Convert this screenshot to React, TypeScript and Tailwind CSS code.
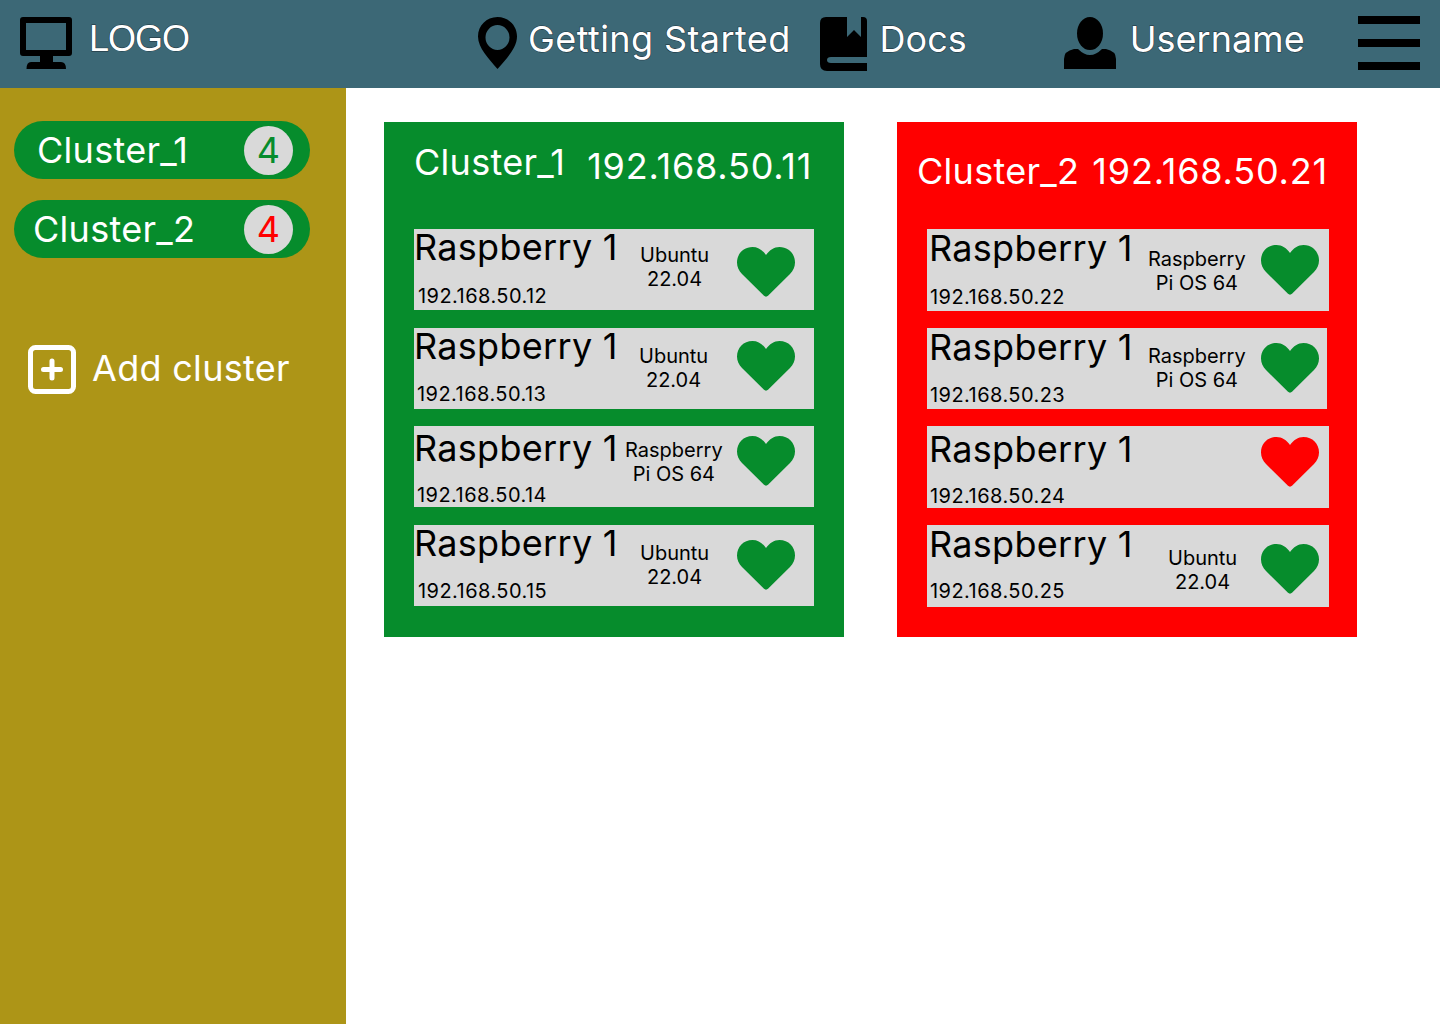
type Node = {
  ip: string;
  os?: string[];
  heart?: string;
  titleTop: string;
  ipLeft: string;
  ipTop: string;
  leftW: string;
  osTop?: string;
  heartTop: string;
  size: string;
};

const greenNodes: Node[] = [
  { ip: "192.168.50.12", os: ["Ubuntu", "22.04"], titleTop: "mt-[-4px]", ipLeft: "ml-1", ipTop: "mt-[15px]", leftW: "w-[226px]", osTop: "mt-[14px]", heartTop: "mt-[18px]", size: "w-[400px] h-[81px]" },
  { ip: "192.168.50.13", os: ["Ubuntu", "22.04"], titleTop: "mt-[-4px]", ipLeft: "ml-[3px]", ipTop: "mt-[14px]", leftW: "w-[225px]", osTop: "mt-[16px]", heartTop: "mt-[13px]", size: "w-[400px] h-[81px]" },
  { ip: "192.168.50.14", os: ["Raspberry", "Pi OS 64"], titleTop: "mt-0", ipLeft: "ml-[3px]", ipTop: "mt-[13px]", leftW: "w-[211px]", osTop: "mt-[12px]", heartTop: "mt-[10px]", size: "w-[400px] h-[81px]" },
  { ip: "192.168.50.15", os: ["Ubuntu", "22.04"], titleTop: "mt-[-4px]", ipLeft: "ml-1", ipTop: "mt-[14px]", leftW: "w-[226px]", osTop: "mt-4", heartTop: "mt-[15px]", size: "w-[400px] h-[81px]" },
];

const redNodes: Node[] = [
  { ip: "192.168.50.22", os: ["Raspberry", "Pi OS 64"], titleTop: "mt-[-3px]", ipLeft: "ml-[3px]", ipTop: "mt-[15px]", leftW: "w-[221px]", osTop: "mt-[18px]", heartTop: "mt-[16px]", size: "w-[402px] h-[82px]" },
  { ip: "192.168.50.23", os: ["Raspberry", "Pi OS 64"], titleTop: "mt-[-3px]", ipLeft: "ml-[3px]", ipTop: "mt-[14px]", leftW: "w-[221px]", osTop: "mt-[16px]", heartTop: "mt-[15px]", size: "w-[400px] h-[81px]" },
  { ip: "192.168.50.24", heart: "text-[#ff0000]", titleTop: "mt-px", ipLeft: "ml-[3px]", ipTop: "mt-[13px]", leftW: "w-[221px]", heartTop: "mt-[11px]", size: "w-[402px] h-[82px]" },
  { ip: "192.168.50.25", os: ["Ubuntu", "22.04"], titleTop: "mt-[-3px]", ipLeft: "ml-[3px]", ipTop: "mt-[13px]", leftW: "w-[241px]", osTop: "mt-[21px]", heartTop: "mt-[19px]", size: "w-[402px] h-[82px]" },
];

function Heart({ className }: { className: string }) {
  return (
    <svg viewBox="0 0 58 50" className={className} fill="currentColor">
      <path d="M29 8C25.5 3 21 0 15.5 0 6.5 0 0 6.8 0 15.5c0 4.6 1.9 8.400 5 11.500L27 48.800c1.100 1.100 2.900 1.100 4 0L53 27c3.100-3.100 5-6.900 5-11.500C58 6.800 51.500 0 42.500 0 37 0 32.500 3 29 8Z" />
    </svg>
  );
}

function NodeRow({ node, titleLeft, heartRight }: { node: Node; titleLeft: string; heartRight: string }) {
  return (
    <div className={`flex shrink-0 bg-[#d9d9d9] text-black ${node.size}`}>
      <div className={`shrink-0 ${node.leftW}`}>
        <div className={`text-[36px] leading-[44px] tracking-[0.3px] whitespace-nowrap ${titleLeft} ${node.titleTop}`}>Raspberry 1</div>
        <div className={`text-[20px] leading-[24px] tracking-[0.45px] whitespace-nowrap ${node.ipLeft} ${node.ipTop}`}>{node.ip}</div>
      </div>
      {node.os && (
        <div className={`text-[20px] leading-[24px] text-center whitespace-nowrap ${node.osTop}`}>
          {node.os.map((line) => (
            <div key={line}>{line}</div>
          ))}
        </div>
      )}
      <Heart className={`ml-auto h-[50px] w-[58px] shrink-0 ${heartRight} ${node.heartTop} ${node.heart ?? "text-[#068c2c]"}`} />
    </div>
  );
}

function PillItem({ name, textLeft, countColor }: { name: string; textLeft: string; countColor: string }) {
  return (
    <div className="flex h-[58px] w-[296px] items-center rounded-[29px] bg-[#068c2c]">
      <span className={`text-[36px] tracking-[0.3px] text-white ${textLeft}`}>{name}</span>
      <span className={`ml-auto mr-[17px] flex size-[49px] items-center justify-center rounded-full bg-[#d9d9d9] text-[36px] ${countColor}`}>4</span>
    </div>
  );
}

const navText = "text-[36px] leading-[44px] text-white [-webkit-text-stroke:1px_#1c2f36] [paint-order:stroke_fill] whitespace-nowrap";

export default function App() {
  return (
    <div className="flex h-[1024px] w-[1440px] flex-col overflow-hidden bg-white font-['Inter',sans-serif]">
      <header className="flex h-[88px] shrink-0 items-start bg-[#3c6876] pl-5">
        <svg viewBox="0 0 52 52" className="mt-[17px] h-[52px] w-[52px] shrink-0">
          <path fillRule="evenodd" d="M3 0H49A3 3 0 0 1 52 3V36A3 3 0 0 1 49 39H33V45H41Q46 45 46 52H6.500Q6.500 45 11 45H20V39H3A3 3 0 0 1 0 36V3A3 3 0 0 1 3 0ZM6 6V33H46V6Z" />
        </svg>
        <span className={`ml-[17px] mt-[17px] tracking-[-1px] font-['Liberation_Sans',sans-serif] ${navText}`}>LOGO</span>

        <svg viewBox="0 0 39 52" className="ml-[289px] mt-[17px] h-[52px] w-[39px] shrink-0">
          <path fillRule="evenodd" d="M19.500 0C30.500 0 39 8.500 39 19.500C39 31 28 42 19.500 52C11 42 0 31 0 19.500C0 8.500 8.500 0 19.500 0ZM19.500 8A12 12.500 0 1 0 19.500 33A12 12.500 0 1 0 19.500 8Z" />
        </svg>
        <span className={`ml-[11px] mt-[17px] tracking-[0.4px] ${navText}`}>Getting Started</span>

        <svg viewBox="0 0 47 54" className="ml-[29px] mt-[17px] h-[54px] w-[47px] shrink-0">
          <path d="M6 0H27V20L34 13L41 20V0H43Q47 0 47 4V40H11Q7 40 7 43Q7 46 11 46H47V54H7Q0 54 0 47V6Q0 0 6 0Z" />
        </svg>
        <span className={`ml-[13px] mt-[17px] ${navText}`}>Docs</span>

        <svg viewBox="0 0 52 52" className="ml-[97px] mt-[17px] h-[52px] w-[52px] shrink-0">
          <ellipse cx="26" cy="16.500" rx="13" ry="16.500" />
          <path d="M0 52V42Q0 34 10 32L14 32Q20 38 26 38Q32 38 38 32L42 32Q52 34 52 42V52Z" />
        </svg>
        <span className={`ml-[14px] mt-[17px] ${navText}`}>Username</span>

        <div className="ml-auto mr-5 mt-4 flex w-[62px] flex-col gap-[15px]">
          <div className="h-2 bg-black" />
          <div className="h-2 bg-black" />
          <div className="h-2 bg-black" />
        </div>
      </header>

      <div className="flex min-h-0 flex-1">
        <aside className="flex w-[346px] shrink-0 flex-col bg-[#ad9517] pl-[14px] pt-[33px]">
          <PillItem name="Cluster_1" textLeft="ml-[23px]" countColor="text-[#068c2c]" />
          <div className="mt-[21px]">
            <PillItem name="Cluster_2" textLeft="ml-[19px]" countColor="text-[#ff0000]" />
          </div>
          <div className="ml-[14px] mt-[87px] flex items-center text-white">
            <svg viewBox="0 0 48 49" className="h-[49px] w-[48px] shrink-0">
              <rect x="2.500" y="2.500" width="43" height="44" rx="5" fill="none" stroke="white" strokeWidth="5" />
              <path d="M24 16V33M15.500 24.500H32.500" stroke="white" strokeWidth="5" strokeLinecap="round" />
            </svg>
            <span className="ml-4 mt-[-4px] text-[36px] leading-[44px] tracking-[0.3px] whitespace-nowrap">Add cluster</span>
          </div>
        </aside>

        <main className="flex flex-1 items-start gap-[53px] pl-[38px] pt-[34px]">
          <section className="flex h-[515px] w-[460px] flex-col bg-[#068c2c] pl-[30px]">
            <div className="flex h-[107px] shrink-0 text-white">
              <span className="mt-[18px] text-[36px] leading-[44px] tracking-[0.3px]">Cluster_1</span>
              <span className="ml-[22px] mt-5 text-[36px] leading-[48px] tracking-[0.8px]">192.168.50.11</span>
            </div>
            {greenNodes.map((node, i) => (
              <div key={node.ip} className={i === 2 ? "mt-[17px]" : i === 0 ? "" : "mt-[18px]"}>
                <NodeRow node={node} titleLeft="ml-0" heartRight="mr-[19px]" />
              </div>
            ))}
          </section>

          <section className="flex h-[515px] w-[460px] flex-col bg-[#ff0000] pl-[30px]">
            <div className="flex h-[107px] shrink-0 text-white">
              <span className="ml-[-10px] mt-[27px] text-[36px] leading-[44px] tracking-[0.3px]">Cluster_2</span>
              <span className="ml-[13px] mt-[25px] text-[36px] leading-[48px] tracking-[0.8px]">192.168.50.21</span>
            </div>
            {redNodes.map((node, i) => (
              <div key={node.ip} className={i === 0 ? "" : "mt-[17px]"}>
                <NodeRow node={node} titleLeft="ml-[2px]" heartRight={node.size.startsWith("w-[402px]") ? "mr-[10px]" : "mr-2"} />
              </div>
            ))}
          </section>
        </main>
      </div>
    </div>
  );
}
